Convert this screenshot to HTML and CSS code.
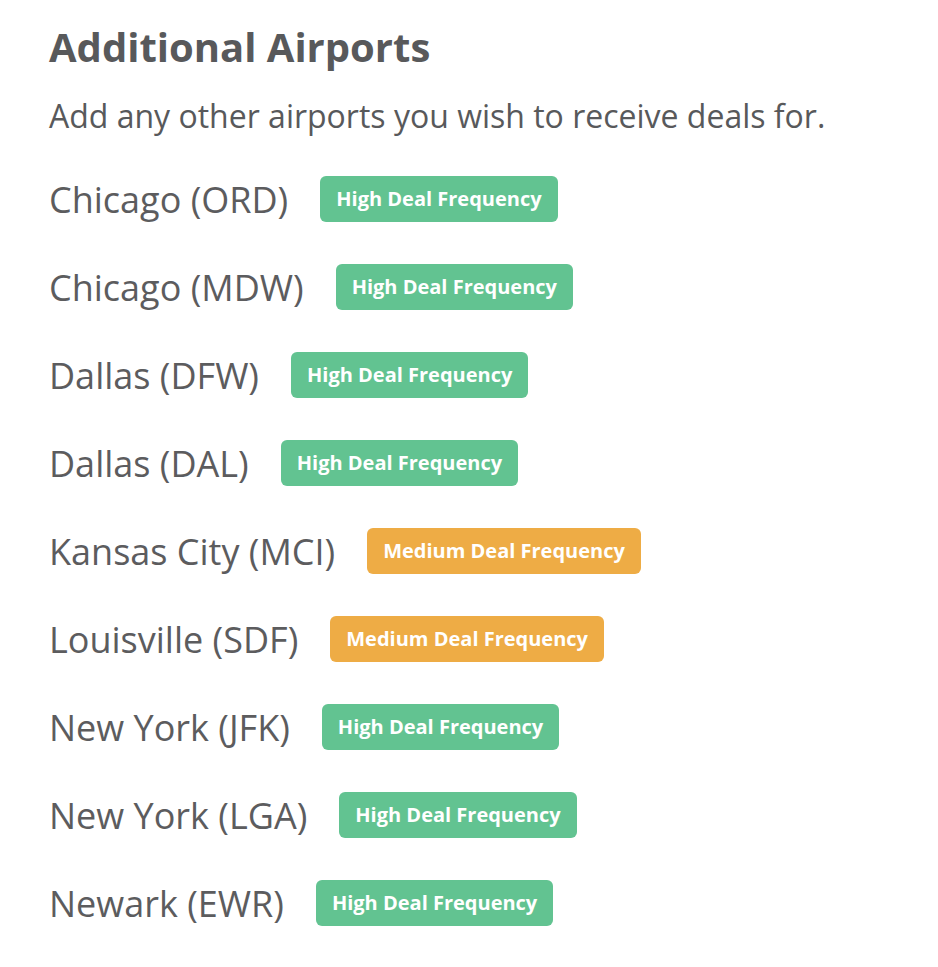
FILE: index.html
```html
<!DOCTYPE html>
<html lang="en">
<head>
    <meta charset="UTF-8">
    <meta name="viewport" content="width=device-width, initial-scale=1.0">
    <title>Additional Airports</title>
    <link rel="stylesheet" href="styles.css">
</head>
<body>
    <div class="airports">
        <h2>Additional Airports</h2>
        <p class="hint">Add any other airports you wish to receive deals for.</p>

        <ul class="airport-list">
            <li class="airport"><span class="name">Chicago (ORD)</span><span class="badge high">High Deal Frequency</span></li>
            <li class="airport"><span class="name">Chicago (MDW)</span><span class="badge high">High Deal Frequency</span></li>
            <li class="airport"><span class="name">Dallas (DFW)</span><span class="badge high">High Deal Frequency</span></li>
            <li class="airport"><span class="name">Dallas (DAL)</span><span class="badge high">High Deal Frequency</span></li>
            <li class="airport"><span class="name">Kansas City (MCI)</span><span class="badge medium">Medium Deal Frequency</span></li>
            <li class="airport"><span class="name">Louisville (SDF)</span><span class="badge medium">Medium Deal Frequency</span></li>
            <li class="airport"><span class="name">New York (JFK)</span><span class="badge high">High Deal Frequency</span></li>
            <li class="airport"><span class="name">New York (LGA)</span><span class="badge high">High Deal Frequency</span></li>
            <li class="airport"><span class="name">Newark (EWR)</span><span class="badge high">High Deal Frequency</span></li>
        </ul>
    </div>
</body>
</html>
```

FILE: styles.css
```css
body, html {
    margin: 0;
    background-color: white;
    font-family: "Open Sans", sans-serif;
    color: #58595b;
}
.airports {
    padding: 22px 49px;
}
h2 {
    margin: 0;
    font-size: 40px;
    font-weight: 700;
    line-height: 50px;
}
.hint {
    margin: 24px 0 0;
    font-size: 32px;
    line-height: 40px;
}
.airport-list {
    list-style: none;
    margin: 19px 0 0;
    padding: 0;
}
.airport {
    display: flex;
    align-items: center;
    gap: 32px;
    height: 88px;
}
.name {
    font-size: 36px;
    color: #5c5c5e;
}
.badge {
    display: inline-block;
    padding: 0 16px;
    height: 46px;
    line-height: 46px;
    border-radius: 6px;
    color: white;
    font-size: 20px;
    font-weight: 700;
}
.badge.high {
    background-color: #62c391;
}
.badge.medium {
    background-color: #eeac45;
}
```
